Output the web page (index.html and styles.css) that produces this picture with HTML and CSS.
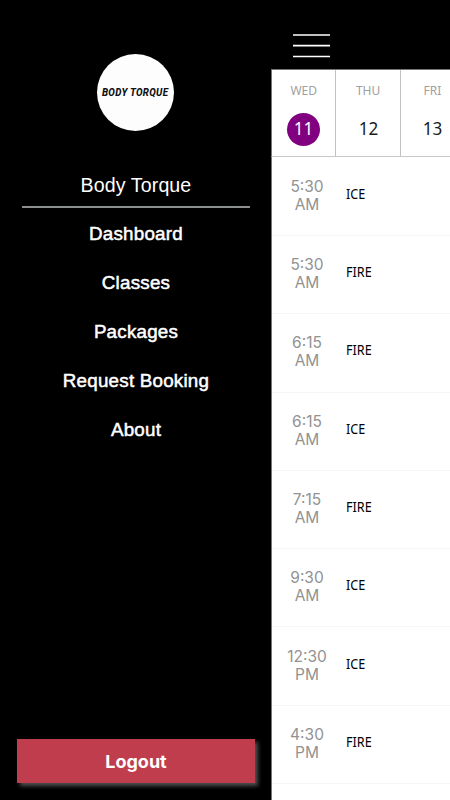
FILE: index.html
```
<!DOCTYPE html>
<html lang="en">
<head>
<meta charset="utf-8">
<title>Body Torque</title>
<link rel="stylesheet" href="styles.css">
</head>
<body>
<div class="app">
  <aside class="sidebar">
    <div class="logo"><span>BODY TORQUE</span></div>
    <h1 class="brand">Body Torque</h1>
    <nav class="menu">
      <a>Dashboard</a>
      <a>Classes</a>
      <a>Packages</a>
      <a>Request Booking</a>
      <a>About</a>
    </nav>
    <button class="logout">Logout</button>
  </aside>
  <main class="schedule">
    <header class="topbar">
      <svg class="burger" width="38" height="26" viewBox="0 0 38 26" fill="none" stroke="#fff" stroke-width="1.7"><path d="M0 2H37M0 12.7H37M0 23.5H37"/></svg>
    </header>
    <div class="days">
      <div class="day selected"><span class="name">WED</span><span class="num"><b>11</b></span></div>
      <div class="day"><span class="name">THU</span><span class="num"><b>12</b></span></div>
      <div class="day"><span class="name">FRI</span><span class="num"><b>13</b></span></div>
    </div>
    <div class="list">
      <div class="row"><div class="time">5:30<br>AM</div><div class="title">ICE</div></div>
      <div class="row"><div class="time">5:30<br>AM</div><div class="title">FIRE</div></div>
      <div class="row"><div class="time">6:15<br>AM</div><div class="title">FIRE</div></div>
      <div class="row"><div class="time">6:15<br>AM</div><div class="title">ICE</div></div>
      <div class="row"><div class="time">7:15<br>AM</div><div class="title">FIRE</div></div>
      <div class="row"><div class="time">9:30<br>AM</div><div class="title">ICE</div></div>
      <div class="row"><div class="time">12:30<br>PM</div><div class="title">ICE</div></div>
      <div class="row"><div class="time">4:30<br>PM</div><div class="title">FIRE</div></div>
    </div>
  </main>
</div>
</body>
</html>
```
FILE: styles.css
```
* { box-sizing: border-box; }
body { margin: 0; background: #000; }
.app {
  display: flex;
  width: 450px;
  height: 800px;
  overflow: hidden;
}
.sidebar {
  display: flex;
  flex-direction: column;
  width: 271px;
  flex: none;
  padding: 54px 16px 17px 17px;
  background: #000;
  color: #fff;
  font-family: "Liberation Sans", Arial, sans-serif;
}
.logo {
  display: flex;
  align-items: center;
  justify-content: center;
  flex: none;
  width: 77px;
  height: 77px;
  margin-left: 80px;
  border-radius: 50%;
  background: #fdfdfd;
}
.logo span {
  color: #111;
  font: italic 800 10.5px/12px "Roboto", sans-serif;
  letter-spacing: .3px;
  white-space: nowrap;
  transform: translate(-.5px, -.5px) scaleX(.93);
}
.brand {
  margin: 34px 5px 0 5px;
  height: 43px;
  border-bottom: 2px solid #8c8f8f;
  font-size: 19.6px;
  font-weight: 400;
  letter-spacing: .1px;
  line-height: 40px;
  text-align: center;
}
.menu {
  display: flex;
  flex-direction: column;
  margin-top: 1px;
}
.menu a {
  height: 49px;
  font-size: 18.8px;
  letter-spacing: .22px;
  line-height: 50px;
  text-align: center;
  -webkit-text-stroke: .5px #fff;
}
.logout {
  height: 44px;
  margin-top: auto;
  padding: 0;
  border: 0;
  background: #c03d4e;
  color: #fff;
  font: 700 18px/45px "Inter", sans-serif;
  box-shadow: 3px 3px 4px #505050;
}
.schedule {
  display: flex;
  flex-direction: column;
  flex: none;
  width: 179px;
  background: #fff;
}
.topbar {
  height: 69px;
  flex: none;
  padding: 33px 0 0 22px;
  background: #000;
}
.burger { display: block; }
.days {
  display: flex;
  flex: none;
  height: 88px;
  border-top: 1px solid #777;
  border-bottom: 1px solid #c8c8c8;
  border-left: 1px solid #777;
}
.day {
  display: flex;
  flex-direction: column;
  align-items: center;
  flex: none;
  width: 64.4px;
  border-right: 1px solid #c2c2c2;
  padding-top: 12px;
  font-family: "Noto Sans", sans-serif;
}
.name {
  height: 16px;
  color: #a0a0a0;
  font-size: 12px;
  line-height: 17px;
}
.num {
  width: 33px;
  height: 33px;
  margin-top: 15px;
  border-radius: 50%;
  color: #1c1c1c;
  font-size: 18px;
  line-height: 31px;
  text-align: center;
}
.num b {
  display: block;
  font-weight: 400;
  transform: scaleX(.95);
}
.selected .num { background: #800080; color: #fff; }
.list {
  flex: 1;
  border-left: 1px solid #777;
}
.row {
  display: flex;
  align-items: center;
  height: 78.3px;
  border-bottom: 1px solid #f6f6f6;
}
.row:first-child {
  height: 79px;
}
.time {
  width: 70px;
  margin-bottom: 1px;
  color: #929292;
  font: 400 15.5px/18px "Inter", sans-serif;
  text-align: center;
}
.title {
  margin: 0 0 5px 4px;
  color: #000;
  font: 400 14px/18px "Noto Sans", sans-serif;
  transform: scaleX(.9);
  transform-origin: left;
}
```
